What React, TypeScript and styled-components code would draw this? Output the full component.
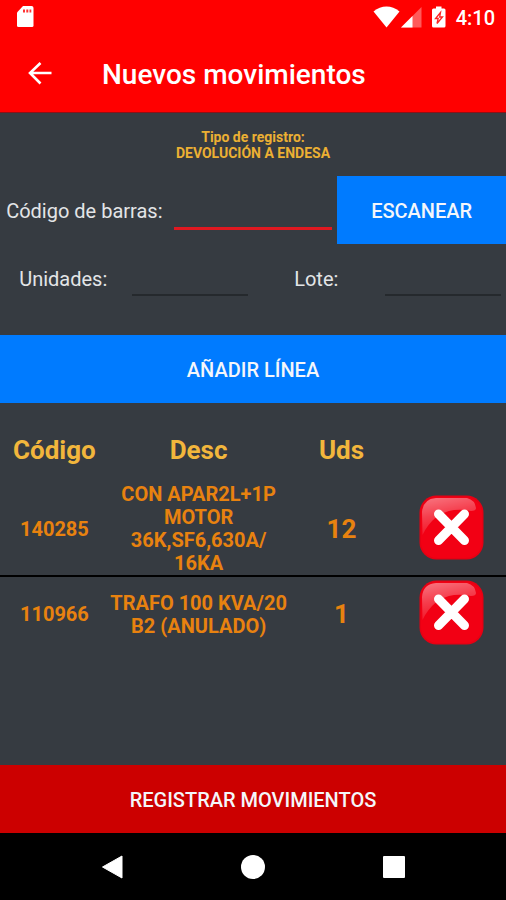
import React from "react";
import styled, { createGlobalStyle } from "styled-components";

const GlobalStyle = createGlobalStyle`
  *, *::before, *::after { box-sizing: border-box; }
  body {
    margin: 0;
    background: #363b41;
    font-family: Roboto, "Liberation Sans", sans-serif;
  }
  button, input { font-family: inherit; }
`;

const Screen = styled.div`
  display: flex;
  flex-direction: column;
  min-height: 100vh;
  background: #363b41;
`;

const StatusBar = styled.div`
  display: flex;
  align-items: center;
  justify-content: space-between;
  height: 34px;
  padding: 0 11px 0 16px;
  background: #ff0000;
  color: #ffffff;
`;

const StatusIcons = styled.div`
  display: flex;
  align-items: center;
`;

const Clock = styled.span`
  margin-left: 9px;
  padding-top: 2px;
  font-size: 20px;
  font-weight: 500;
  line-height: 24px;
`;

const Toolbar = styled.header`
  display: flex;
  align-items: center;
  gap: 46px;
  height: 79px;
  padding: 0 24px;
  background: #ff0000;
  border-bottom: 1px solid #8c1117;
`;

const IconButton = styled.button`
  display: flex;
  padding: 0;
  border: 0;
  background: none;
  cursor: pointer;
`;

const Title = styled.h1`
  margin: 0;
  padding-top: 3px;
  color: #ffffff;
  font-size: 28px;
  font-weight: 500;
  line-height: 32px;
`;

const Main = styled.main`
  display: flex;
  flex: 1;
  flex-direction: column;
`;

const RecordType = styled.p`
  margin: 0;
  padding: 16px 0 15px;
  color: #ecb033;
  font-size: 14px;
  font-weight: 700;
  line-height: 16px;
  text-align: center;
`;

const FormRow = styled.div<{ $columns: number }>`
  display: grid;
  grid-template-columns: repeat(${(p) => p.$columns}, 1fr);
  align-items: center;
  height: 68px;
`;

const Label = styled.label`
  padding-top: 2px;
  color: #e3e5e7;
  font-size: 20px;
  line-height: 24px;
  text-align: center;
  white-space: nowrap;
`;

const TextInput = styled.input<{ $active?: boolean }>`
  min-width: 0;
  height: ${(p) => (p.$active ? 40 : 36)}px;
  margin: 0 5px;
  padding: 0 4px;
  border: 0;
  border-bottom: ${(p) => (p.$active ? "3px solid #e01820" : "2px solid #25292d")};
  border-radius: 0;
  outline: 0;
  background: transparent;
  color: #e3e5e7;
  font-size: 20px;
`;

const ActionButton = styled.button<{ $tone: "blue" | "red" }>`
  flex: none;
  height: 68px;
  padding: 2px 0 0;
  border: 0;
  background: ${(p) => (p.$tone === "blue" ? "#007bff" : "#cc0000")};
  color: #f4f6fa;
  font-size: 20px;
  font-weight: 500;
  line-height: 24px;
  cursor: pointer;
`;

const Fields = styled.form`
  display: flex;
  flex-direction: column;
`;

const SubmitButton = styled(ActionButton)`
  margin-top: 23px;
`;

const Lines = styled.table`
  width: 100%;
  margin-top: 19px;
  border-collapse: collapse;
  table-layout: fixed;
`;

const Column = styled.col<{ $width: string }>`
  width: ${(p) => p.$width};
`;

const HeadCell = styled.th`
  height: 60px;
  padding: 0 0 4px;
  color: #f2b63c;
  font-size: 26px;
  font-weight: 700;
  line-height: 32px;
`;

const LineRow = styled.tr`
  & + & { border-top: 2px solid #000000; }
`;

const Cell = styled.td<{ $large?: boolean }>`
  height: 75px;
  padding: 1px 0 0;
  color: #e8820f;
  font-size: ${(p) => (p.$large ? 26 : 20)}px;
  font-weight: 700;
  line-height: 23px;
  text-align: center;
  vertical-align: middle;
  overflow-wrap: break-word;
`;

const ActionCell = styled(Cell)`
  padding: 0 0 3px 2px;
`;

const DeleteButton = styled(IconButton)`
  margin: 0 auto;
`;

const Spacer = styled.div`
  flex: 1;
`;

const NavBar = styled.nav`
  display: flex;
  align-items: center;
  justify-content: space-between;
  height: 67px;
  padding: 0 100px;
  background: #000000;
`;

const SdCard = () => (
  <svg width="19" height="22" viewBox="0 0 19 22" aria-hidden="true">
    <path d="M7 0h8.500a2 2 0 0 1 2 2v17.500a1.500 1.500 0 0 1-1.500 1.500H2.500A1.500 1.500 0 0 1 1 19.500V6.500z" fill="#fff" />
    <path d="M7 3.500h2v3H7zM10.300 3.500h2v3h-2zM13.500 3.500h1.800v3h-1.800z" fill="#f33" />
  </svg>
);

const Wifi = () => (
  <svg width="27" height="22" viewBox="0 0 27 22" aria-hidden="true">
    <path d="M.5 5.500Q6.500.5 13.500.5t13 5L13.500 21.500z" fill="#fff" />
  </svg>
);

const Signal = () => (
  <svg width="22" height="22" viewBox="0 0 22 22" aria-hidden="true">
    <path d="M21.500 1v20.500H1z" fill="#ff5a5a" />
    <path d="M12.500 10v11.500H1z" fill="#fff" />
  </svg>
);

const BatteryIcon = styled.svg`
  margin-left: 9px;
`;

const Battery = () => (
  <BatteryIcon width="16" height="22" viewBox="0 0 16 22" aria-hidden="true">
    <path d="M5 .5h5.500V2.500H13a1.500 1.500 0 0 1 1.500 1.500v16a1.500 1.500 0 0 1-1.500 1.500H2.500A1.500 1.500 0 0 1 1 20V4a1.500 1.500 0 0 1 1.500-1.500H5z" fill="#fff" />
    <path d="M9.500 6.500 4.500 12.500h2.700l-1.200 5L11.500 11H8.700z" fill="none" stroke="#f22" strokeWidth="1.300" />
  </BatteryIcon>
);

const BackArrow = () => (
  <svg width="32" height="32" viewBox="0 0 32 32" fill="none" stroke="#fff" strokeWidth="2.600" aria-hidden="true">
    <path d="M27.500 16H6M16.500 6 6 16l10.500 10.500" />
  </svg>
);

const DeleteIcon = ({ id }: { id: string }) => (
  <svg width="65" height="65" viewBox="0 0 65 65" aria-hidden="true">
    <defs>
      <linearGradient id={id} x1="0.200" y1="0" x2="0.500" y2="1">
        <stop offset="0" stopColor="#fff" stopOpacity="0.440" />
        <stop offset="0.450" stopColor="#fff" stopOpacity="0.240" />
        <stop offset="1" stopColor="#fff" stopOpacity="0.060" />
      </linearGradient>
    </defs>
    <rect x="0.500" y="0.500" width="64" height="64" rx="17" fill="#e60013" />
    <rect x="2" y="2" width="61" height="61" rx="16" fill="#f20014" />
    <path d="M17 3h31q8 2 9 10 0 3-5 3-8-2-17-1Q14 18 3.500 40L3 17Q4 4 17 3z" fill={`url(#${id})`} />
    <path d="M19.500 19 45.500 45.500M45.500 19 19.500 45.500" stroke="#fff" strokeWidth="9" strokeLinecap="round" />
  </svg>
);

const NavBack = () => (
  <svg width="24" height="26" viewBox="0 0 24 26" aria-hidden="true">
    <path d="M2.500 13 22 2v22z" fill="#fff" stroke="#fff" strokeLinejoin="round" />
  </svg>
);

const NavHome = () => (
  <svg width="26" height="26" viewBox="0 0 26 26" aria-hidden="true">
    <circle cx="13" cy="13" r="12" fill="#fff" />
  </svg>
);

const NavRecents = () => (
  <svg width="24" height="26" viewBox="0 0 24 26" aria-hidden="true">
    <rect x="1" y="2" width="22" height="22" rx="1" fill="#fff" />
  </svg>
);

interface Line {
  code: string;
  description: string[];
  units: number;
}

const lines: Line[] = [
  { code: "140285", description: ["CON APAR2L+1P", "MOTOR", "36K,SF6,630A/", "16KA"], units: 12 },
  { code: "110966", description: ["TRAFO 100 KVA/20", "B2 (ANULADO)"], units: 1 },
];

export default function App() {
  return (
    <Screen>
      <GlobalStyle />
      <StatusBar>
        <SdCard />
        <StatusIcons>
          <Wifi />
          <Signal />
          <Battery />
          <Clock>4:10</Clock>
        </StatusIcons>
      </StatusBar>
      <Toolbar>
        <IconButton type="button" aria-label="Atrás">
          <BackArrow />
        </IconButton>
        <Title>Nuevos movimientos</Title>
      </Toolbar>
      <Main>
        <RecordType>
          Tipo de registro:
          <br />
          DEVOLUCIÓN A ENDESA
        </RecordType>
        <Fields onSubmit={(event) => event.preventDefault()}>
          <FormRow $columns={3}>
            <Label htmlFor="barcode">Código de barras:</Label>
            <TextInput id="barcode" type="text" $active />
            <ActionButton type="button" $tone="blue">ESCANEAR</ActionButton>
          </FormRow>
          <FormRow $columns={4}>
            <Label htmlFor="units">Unidades:</Label>
            <TextInput id="units" type="text" inputMode="numeric" />
            <Label htmlFor="batch">Lote:</Label>
            <TextInput id="batch" type="text" />
          </FormRow>
          <SubmitButton type="submit" $tone="blue">AÑADIR LÍNEA</SubmitButton>
        </Fields>
        <Lines>
          <colgroup>
            <Column $width="21.500%" />
            <Column $width="35.500%" />
            <Column $width="21%" />
            <Column $width="22%" />
          </colgroup>
          <thead>
            <tr>
              <HeadCell scope="col">Código</HeadCell>
              <HeadCell scope="col">Desc</HeadCell>
              <HeadCell scope="col">Uds</HeadCell>
              <HeadCell as="td" />
            </tr>
          </thead>
          <tbody>
            {lines.map((line) => (
              <LineRow key={line.code}>
                <Cell>{line.code}</Cell>
                <Cell>
                  {line.description.map((part, index) => (
                    <React.Fragment key={part}>
                      {index > 0 && <br />}
                      {part}
                    </React.Fragment>
                  ))}
                </Cell>
                <Cell $large>{line.units}</Cell>
                <ActionCell>
                  <DeleteButton type="button" aria-label={`Eliminar ${line.code}`}>
                    <DeleteIcon id={`gloss-${line.code}`} />
                  </DeleteButton>
                </ActionCell>
              </LineRow>
            ))}
          </tbody>
        </Lines>
        <Spacer />
        <ActionButton type="button" $tone="red">REGISTRAR MOVIMIENTOS</ActionButton>
      </Main>
      <NavBar>
        <IconButton type="button" aria-label="Atrás">
          <NavBack />
        </IconButton>
        <IconButton type="button" aria-label="Inicio">
          <NavHome />
        </IconButton>
        <IconButton type="button" aria-label="Recientes">
          <NavRecents />
        </IconButton>
      </NavBar>
    </Screen>
  );
}
